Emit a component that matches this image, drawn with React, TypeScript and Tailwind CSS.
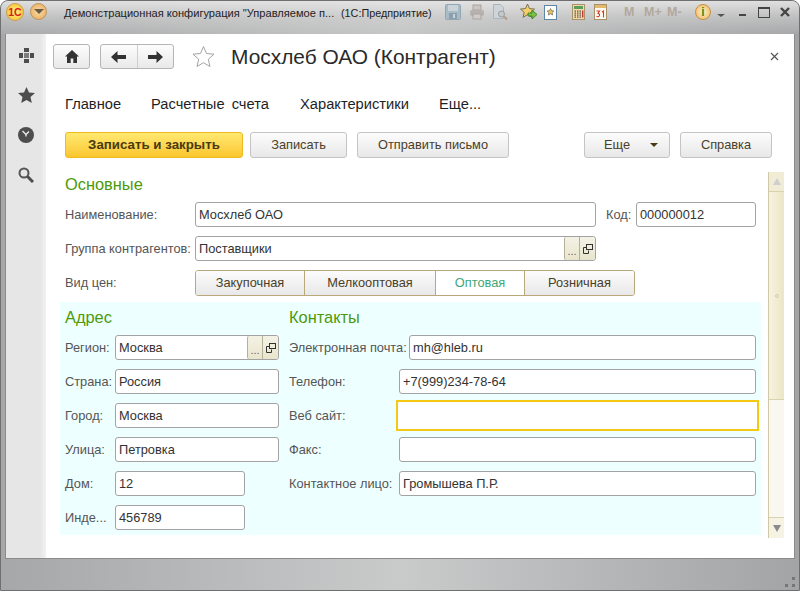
import React from "react";

const Save = () => (
  <svg width="16" height="16" viewBox="0 0 16 16"><rect x="0.5" y="0.5" width="15" height="15" rx="1" fill="#a9bcc6" stroke="#92a7b3" /><rect x="3" y="1" width="10" height="6" fill="#c9d3d8" /><rect x="4" y="9" width="8" height="6" fill="#8ba0ad" /><rect x="8" y="10" width="2" height="4" fill="#c9d3d8" /></svg>
);
const Print = () => (
  <svg width="16" height="16" viewBox="0 0 16 16"><rect x="4" y="1" width="8" height="5" fill="#c9c6c4" stroke="#a9a5a3" /><rect x="1" y="6" width="14" height="6" rx="2" fill="#b7b2af" /><rect x="4" y="10" width="8" height="5" fill="#cfccca" stroke="#a9a5a3" /></svg>
);
const Preview = () => (
  <svg width="16" height="16" viewBox="0 0 16 16"><path d="M1.5.5h7l3 3v11h-10z" fill="#cdd5da" stroke="#a5b5bf" /><circle cx="9.5" cy="10" r="3" fill="#c5c9ca" stroke="#9a9a9a" /><path d="M12 12.5l3 3" stroke="#b39a88" strokeWidth="2" /></svg>
);
const StarArrow = () => (
  <svg width="18" height="18" viewBox="0 0 18 18"><path d="M7.5 1l2 4.6 5 .5-3.7 3.3 1.1 4.9-4.4-2.6-4.4 2.6 1.1-4.9L.5 6.1l5-.5z" fill="#f6cf6b" stroke="#77705a" /><path d="M8 10h4V7l5 4.5-5 4.5v-3H8z" fill="#7bc043" stroke="#3a7a22" strokeWidth="0.8" /></svg>
);
const StarDoc = () => (
  <svg width="13" height="15" viewBox="0 0 13 15"><rect x="0.5" y="0.5" width="12" height="14" fill="#fdfdfd" stroke="#5f86a6" /><path d="M6.5 3.5l1 2.2 2.4.3-1.8 1.6.5 2.4-2.1-1.2-2.1 1.2.5-2.4L3.100 6l2.400-.3z" fill="#f2c65e" stroke="#6d6550" strokeWidth="0.7" /></svg>
);
const Calc = () => (
  <svg width="13" height="16" viewBox="0 0 13 16"><rect x="0.5" y="0.5" width="12" height="15" fill="#f3d9a6" stroke="#a8926a" /><rect x="2" y="2" width="9" height="3" fill="#58a05a" />
    {[6.5, 8.5, 10.5, 12.5].map((y) => [2.5, 5, 7.5].map((x) => <rect key={`${x}-${y}`} x={x} y={y} width="1.5" height="1.2" fill="#555" />))}
    <rect x="10" y="6.500" width="1.400" height="7" fill="#c0392b" /></svg>
);
const Calendar = () => (
  <svg width="13" height="16" viewBox="0 0 13 16"><rect x="0.5" y="0.5" width="12" height="15" fill="#fdfaf3" stroke="#a8926a" /><rect x="1" y="1" width="11" height="3" fill="#e5b96b" /><path d="M2.500 7h3l-1.500 2.500c1.500 0 1.700 1 1.500 2-.2 1.200-2 1.500-3 .8M8 8l1.500-1v6.500" fill="none" stroke="#d93a24" strokeWidth="1.100" /></svg>
);
const Home = () => (
  <svg width="14" height="13" viewBox="0 0 14 13"><path d="M7 0L0 6.500h2V13h3.700V8.500h2.600V13H12V6.500h2z" fill="#333" /></svg>
);
const ArrowL = () => (
  <svg width="15" height="12" viewBox="0 0 15 12"><path d="M6.500 0L0 6l6.500 6V8H15V4H6.500z" fill="#333" /></svg>
);
const ArrowR = () => (
  <svg width="15" height="12" viewBox="0 0 15 12"><path d="M8.500 0L15 6l-6.500 6V8H0V4h8.500z" fill="#333" /></svg>
);
const BigStar = () => (
  <svg width="23" height="23" viewBox="0 0 23 23"><path d="M11.500 1.500l3 7 7.500.7-5.700 5 1.700 7.300-6.500-3.800-6.500 3.800 1.700-7.300-5.700-5 7.500-.7z" fill="#fff" stroke="#a3a3a3" /></svg>
);
const Dots = () => (
  <svg width="15" height="15" viewBox="0 0 15 15" fill="#4d4d4d"><rect x="5" y="0" width="5" height="4" /><rect x="0" y="5" width="4" height="5" /><rect x="5" y="5" width="5" height="5" fill="#7c7c7c" /><rect x="11" y="5" width="4" height="5" /><rect x="5" y="11" width="5" height="4" /></svg>
);
const SideStar = () => (
  <svg width="17" height="16" viewBox="0 0 17 16"><path d="M8.500 0l2.500 5.500 6 .6-4.500 4 1.300 5.900-5.300-3.100L3.200 16l1.300-5.900-4.500-4 6-.6z" fill="#4d4d4d" /></svg>
);
const Clock = () => (
  <svg width="16" height="16" viewBox="0 0 16 16"><circle cx="8" cy="8" r="8" fill="#4d4d4d" /><path d="M4.500 4L8 7.500 11 4.500M8 7.500V9.500" fill="none" stroke="#eee" strokeWidth="1.300" /></svg>
);
const Search = () => (
  <svg width="16" height="16" viewBox="0 0 16 16"><circle cx="6" cy="6" r="4.500" fill="none" stroke="#555" strokeWidth="2" /><path d="M9.500 9.500L15 15" stroke="#4d4d4d" strokeWidth="3" /></svg>
);
const OpenIcon = () => (
  <svg width="10" height="10" viewBox="0 0 10 10" fill="none" stroke="#333"><rect x="3.500" y="0.500" width="6" height="5" /><path d="M3.500 3.500h-3v6h5v-3" /></svg>
);

const PickButtons = () => (
  <div className="flex h-full shrink-0">
    <div className="w-[16px] h-full bg-linear-to-b from-[#f4f2e6] to-[#e9e5cc] border-x border-[#b5b09a] rounded-l-[2px] flex items-end justify-center text-[11px] leading-[18px] text-[#666]">...</div>
    <div className="w-[15px] h-full bg-linear-to-b from-[#f4f2e6] to-[#e9e5cc] flex items-center justify-center rounded-r-[3px]"><OpenIcon /></div>
  </div>
);

const Input = ({ value, className = "", pick = false }: { value?: string; className?: string; pick?: boolean }) => (
  <div className={`h-[25px] bg-white border border-[#a3a3a3] rounded-[3px] flex items-center justify-between text-[#333] overflow-hidden ${className}`}>
    <span className="pl-[3px] whitespace-nowrap">{value}</span>
    {pick && <PickButtons />}
  </div>
);

const Btn = ({ children, className = "" }: { children: React.ReactNode; className?: string }) => (
  <div className={`h-[26px] flex items-center justify-center border border-[#c4c4c4] rounded-[3px] bg-linear-to-b from-[#fcfcfc] to-[#e8e8e8] text-[#4a4028] ${className}`}>{children}</div>
);

const Row = ({ label, labelW, children, className = "" }: { label: string; labelW: string; children: React.ReactNode; className?: string }) => (
  <div className={`flex items-center ${className}`}>
    <div className={`${labelW} shrink-0 text-[#555] whitespace-nowrap`}>{label}</div>
    {children}
  </div>
);

export default function App() {
  return (
    <div className="w-[800px] h-[591px] bg-white overflow-hidden font-['Liberation_Sans',Arial,sans-serif] text-[12.8px]">
      <div className="w-full h-full flex flex-col rounded-t-[8px] border border-[#6f6f6f] bg-linear-to-r from-[#a6a7a9] via-[#c9caca] to-[#a3a4a6] overflow-hidden">
        {/* title bar */}
        <div className="h-[33px] shrink-0 flex items-start pt-[3px] bg-linear-to-b from-[#e6e6e6]/90 via-[#d0d0d0]/60 to-[#b5b5b5]/20 text-[#222] text-[11.1px]">
          <div className="ml-[5px] mt-[-1px] w-[18px] h-[18px] rounded-full border border-[#c9a04a] bg-radial from-[#fff27a] to-[#f5b92c] flex items-center justify-center text-[#d8201c] text-[10.5px] font-bold leading-none">1С</div>
          <div className="ml-[6px] mt-[-1px] w-[17px] h-[17px] rounded-full border border-[#bc9358] bg-radial from-[#f8dca0] to-[#e9a75b] flex items-center justify-center">
            <div className="w-0 h-0 border-x-[5px] border-x-transparent border-t-[5px] border-t-[#6a5a48]" />
          </div>
          <div className="ml-[17px] w-[381px] h-[20px] leading-[20px] mt-[-1px] flex whitespace-nowrap">
            <span className="w-[277px]">Демонстрационная конфигурация "Управляемое п...</span>
            <span className="text-[10.8px]">(1С:Предприятие)</span>
          </div>
          <div className="flex items-center h-[18px] mt-[-1px]">
            <div className="w-[24px]"><Save /></div>
            <div className="w-[23px]"><Print /></div>
            <div className="w-[28px]"><Preview /></div>
            <div className="w-[24px]"><StarArrow /></div>
            <div className="w-[28px]"><StarDoc /></div>
            <div className="w-[22px]"><Calc /></div>
            <div className="w-[30px]"><Calendar /></div>
            <div className="w-[20px] text-[#b3a89e] font-bold text-[12.5px]">M</div>
            <div className="w-[23px] text-[#b3a89e] font-bold text-[12.5px]">M+</div>
            <div className="w-[28px] text-[#b3a89e] font-bold text-[12.5px]">M-</div>
            <div className="w-[16px] h-[16px] rounded-full border border-[#c98f3c] bg-radial from-[#fdf3c4] to-[#eeb25e] flex items-center justify-center text-[#3d8b1f] font-bold text-[12px] leading-none">i</div>
            <div className="ml-[6px] mt-[6px] w-0 h-0 border-x-[4px] border-x-transparent border-t-[3px] border-t-[#555]" />
            <div className="ml-[14px] mt-[6px] w-[7px] h-[2px] bg-[#444]" />
            <div className="ml-[12px] w-[12px] h-[11px] border border-[#444] border-t-2" />
            <svg className="ml-[10px]" width="10" height="10" viewBox="0 0 10 10"><path d="M1 1l8 8M9 1l-8 8" stroke="#444" strokeWidth="2.400" /></svg>
          </div>
        </div>

        {/* window body */}
        <div className="h-[525px] shrink-0 mx-[4px] flex bg-white border-x border-b border-[#8b8b8b]">
          {/* sidebar */}
          <div className="w-[40px] shrink-0 flex flex-col items-center pt-[14px] gap-[24px] bg-linear-to-r from-[#e6e6e6] from-[85%] to-[#f2f2f2] text-[#4d4d4d]">
            <Dots />
            <SideStar />
            <Clock />
            <Search />
          </div>

          {/* main */}
          <div className="flex-1 min-w-0 flex flex-col">
            {/* nav */}
            <div className="h-[25px] mt-[10px] flex items-center pl-[7px] pr-[15px]">
              <div className="w-[37px] h-[25px] border border-[#b5b5b5] rounded-[3px] bg-linear-to-b from-[#fdfdfd] to-[#e9e9e9] flex items-center justify-center"><Home /></div>
              <div className="ml-[10px] w-[74px] h-[25px] border border-[#b5b5b5] rounded-[3px] bg-linear-to-b from-[#fdfdfd] to-[#e9e9e9] flex">
                <div className="flex-1 flex items-center justify-center border-r border-[#cfcfcf]"><ArrowL /></div>
                <div className="flex-1 flex items-center justify-center"><ArrowR /></div>
              </div>
              <div className="ml-[18px]"><BigStar /></div>
              <div className="ml-[16px] text-[20.9px] text-[#2a2a2a] whitespace-nowrap">Мосхлеб ОАО (Контрагент)</div>
              <svg className="ml-auto" width="9" height="9" viewBox="0 0 9 9"><path d="M1 1l7 7M8 1L1 8" stroke="#555" strokeWidth="1.200" /></svg>
            </div>

            {/* tabs */}
            <div className="mt-[25px] h-[20px] flex items-center pl-[19px] text-[14.7px] [word-spacing:3px] text-[#1f1f1f] whitespace-nowrap">
              <span className="w-[86px]">Главное</span>
              <span className="w-[149px]">Расчетные счета</span>
              <span className="w-[139px]">Характеристики</span>
              <span>Еще...</span>
            </div>

            {/* command bar */}
            <div className="mt-[18px] flex pl-[19px]">
              <div className="w-[178px] h-[26px] flex items-center justify-center rounded-[3px] border border-[#f0bb1e] bg-linear-to-b from-[#ffe96f] to-[#fbc62b] text-[#4a3a10] font-bold text-[13.3px]">Записать и закрыть</div>
              <Btn className="ml-[7px] w-[97px]">Записать</Btn>
              <Btn className="ml-[10px] w-[152px]">Отправить письмо</Btn>
              <Btn className="ml-[75px] w-[86px]">
                <span className="ml-[8px]">Еще</span>
                <span className="ml-[20px] w-0 h-0 border-x-[4px] border-x-transparent border-t-[4px] border-t-[#4a3a10]" />
              </Btn>
              <Btn className="ml-[10px] w-[92px]">Справка</Btn>
            </div>

            {/* form + scrollbar */}
            <div className="mt-[14px] flex pl-[14px]">
              <div className="w-[701px] shrink-0">
                <div className="h-[24px] pl-[5px] text-[16.4px] leading-[25px] text-[#4c9a0a]">Основные</div>
                <div className="mt-[6px] pl-[5px] pr-[5px] flex flex-col gap-[9px]">
                  <Row label="Наименование:" labelW="w-[130px]">
                    <Input value="Мосхлеб ОАО" className="w-[401px]" />
                    <span className="ml-[10px] w-[30px] text-[#555]">Код:</span>
                    <Input value="000000012" className="w-[120px]" />
                  </Row>
                  <Row label="Группа контрагентов:" labelW="w-[130px]">
                    <Input value="Поставщики" className="w-[401px]" pick />
                  </Row>
                  <Row label="Вид цен:" labelW="w-[130px]">
                    <div className="w-[440px] h-[26px] flex border border-[#b8a97c] rounded-[3px] overflow-hidden text-[#4a4028] text-center">
                      <div className="w-[109px] leading-[24px] border-r border-[#b8a97c] bg-linear-to-b from-[#fcfcfc] to-[#e8e8e8]">Закупочная</div>
                      <div className="w-[131px] leading-[24px] border-r border-[#b8a97c] bg-linear-to-b from-[#fcfcfc] to-[#e8e8e8]">Мелкооптовая</div>
                      <div className="w-[89px] leading-[24px] border-r border-[#b8a97c] bg-white text-[#3fa77a]">Оптовая</div>
                      <div className="flex-1 leading-[24px] bg-linear-to-b from-[#fcfcfc] to-[#e8e8e8]">Розничная</div>
                    </div>
                  </Row>
                </div>

                {/* cyan panel */}
                <div className="mt-[6px] h-[233px] bg-[#eeffff] pl-[5px] pr-[5px] flex">
                  <div className="w-[224px] shrink-0">
                    <div className="h-[26px] pt-[2px] text-[16.4px] leading-[26px] text-[#4c9a0a]">Адрес</div>
                    <div className="mt-[7px] flex flex-col gap-[9px]">
                      <Row label="Регион:" labelW="w-[50px]"><Input value="Москва" className="w-[164px]" pick /></Row>
                      <Row label="Страна:" labelW="w-[50px]"><Input value="Россия" className="w-[164px]" /></Row>
                      <Row label="Город:" labelW="w-[50px]"><Input value="Москва" className="w-[164px]" /></Row>
                      <Row label="Улица:" labelW="w-[50px]"><Input value="Петровка" className="w-[164px]" /></Row>
                      <Row label="Дом:" labelW="w-[50px]"><Input value="12" className="w-[130px]" /></Row>
                      <Row label="Инде..." labelW="w-[50px]"><Input value="456789" className="w-[130px]" /></Row>
                    </div>
                  </div>
                  <div className="flex-1 min-w-0">
                    <div className="h-[26px] pt-[2px] text-[16.4px] leading-[26px] text-[#4c9a0a]">Контакты</div>
                    <div className="mt-[7px] flex flex-col gap-[9px]">
                      <Row label="Электронная почта:" labelW="w-[120px]"><Input value="mh@hleb.ru" className="flex-1" /></Row>
                      <Row label="Телефон:" labelW="w-[110px]"><Input value="+7(999)234-78-64" className="flex-1" /></Row>
                      <Row label="Веб сайт:" labelW="w-[107px]" className="h-[25px]">
                        <div className="h-[31px] flex-1 mr-[-3px] bg-white border-2 border-[#f5c814]" />
                      </Row>
                      <Row label="Факс:" labelW="w-[110px]"><Input className="flex-1" /></Row>
                      <Row label="Контактное лицо:" labelW="w-[110px]"><Input value="Громышева П.Р." className="flex-1" /></Row>
                    </div>
                  </div>
                </div>
              </div>

              {/* scrollbar */}
              <div className="ml-[7px] w-[16px] h-[366px] flex flex-col border-l border-[#cfc9a8] bg-[#f9f7ef]">
                <div className="h-[20px] bg-[#f1ecd6] border-b border-[#d8d2b0] flex items-center justify-center">
                  <div className="w-0 h-0 border-x-[4px] border-x-transparent border-b-[7px] border-b-[#cfcfcf]" />
                </div>
                <div className="h-[208px] bg-linear-to-r from-[#f8f3df] to-[#ece5c6] border-b border-[#d8d2b0] flex items-center justify-center">
                  <div className="w-[4px] h-[4px] rounded-full border border-[#d3cdae]" />
                </div>
                <div className="flex-1" />
                <div className="h-[21px] bg-[#f6f3e4] border-t border-[#d8d2b0] flex items-center justify-center">
                  <div className="w-0 h-0 border-x-[4px] border-x-transparent border-t-[7px] border-t-[#8b8b8b]" />
                </div>
              </div>
            </div>
          </div>
        </div>

        {/* bottom bar */}
        <div className="flex-1 flex items-end justify-end pr-[4px] pb-[3px]">
          <svg width="10" height="10" viewBox="0 0 10 10" fill="#777"><rect x="7" y="0" width="3" height="3" /><rect x="7" y="7" width="3" height="3" /><rect x="0" y="7" width="3" height="3" /></svg>
        </div>
      </div>
    </div>
  );
}
